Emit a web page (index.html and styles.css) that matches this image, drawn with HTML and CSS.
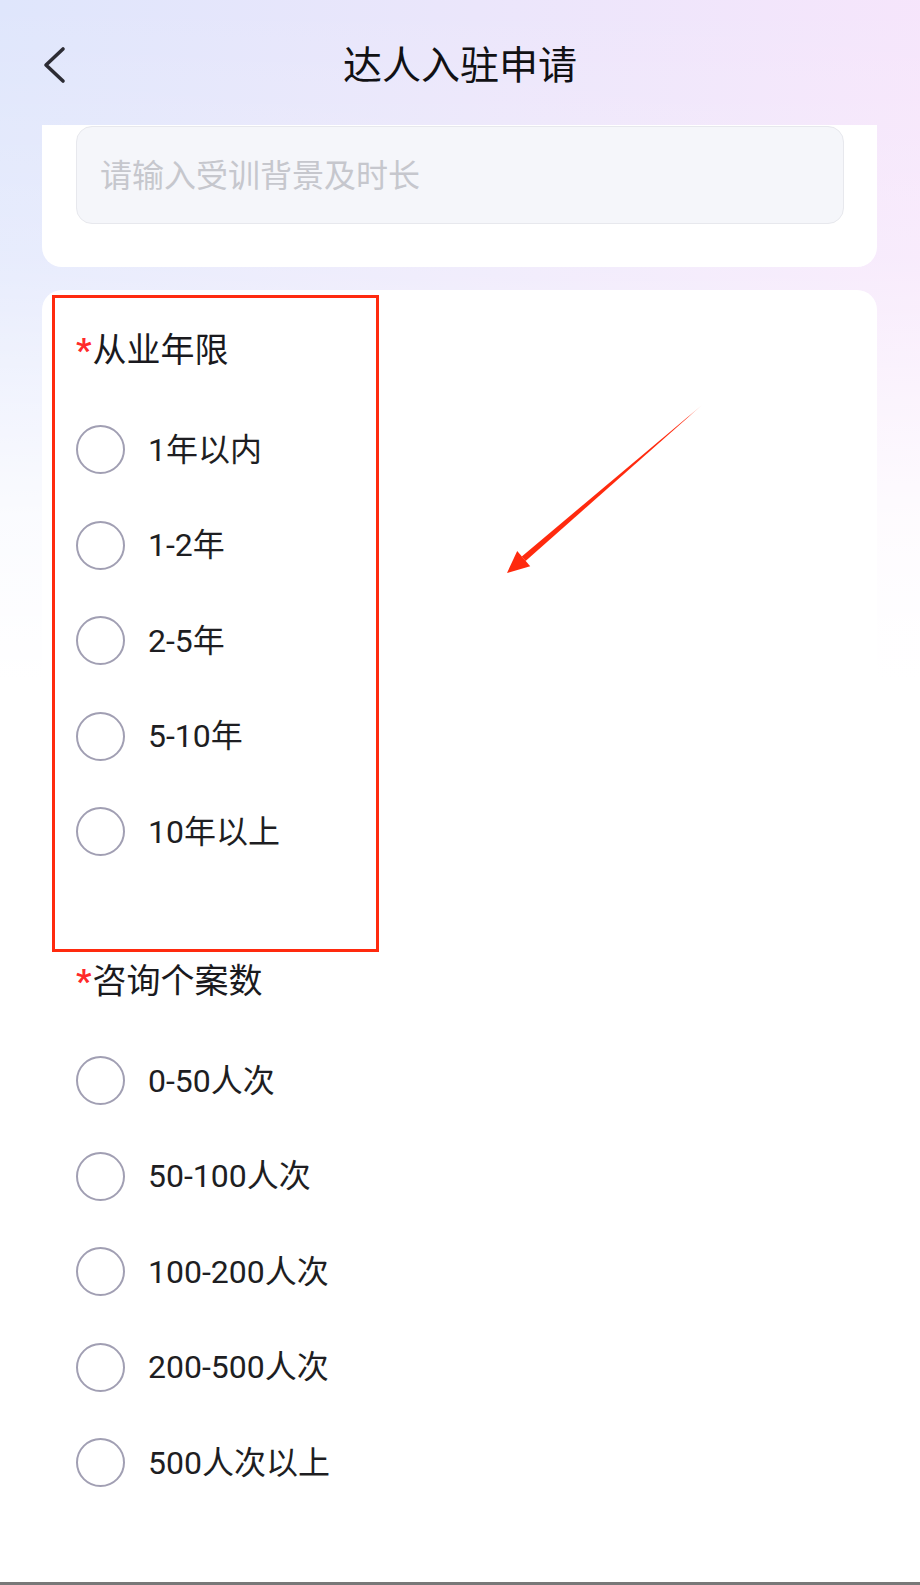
FILE: index.html
```html
<!DOCTYPE html>
<html lang="zh-CN">
<head>
<meta charset="utf-8">
<title>达人入驻申请</title>
<link rel="stylesheet" href="styles.css">
</head>
<body>
<div class="screen">
  <header class="nav">
    <div class="nav-left">
      <svg class="back" width="30" height="42" viewBox="0 0 30 42">
        <polyline points="23,5 6,21 23,37" fill="none" stroke="#2c2c34" stroke-width="3.6" stroke-linecap="round" stroke-linejoin="round"/>
      </svg>
    </div>
    <h1 class="nav-title">达人入驻申请</h1>
    <div class="nav-right"></div>
  </header>

  <main class="content">
    <section class="card card-top">
      <div class="input">请输入受训背景及时长</div>
    </section>

    <section class="card card-main">
      <div class="field">
        <div class="label"><span class="req">*</span>从业年限</div>
        <ul class="options">
          <li class="option"><span class="radio"></span><span class="opt-text">1年以内</span></li>
          <li class="option"><span class="radio"></span><span class="opt-text">1-2年</span></li>
          <li class="option"><span class="radio"></span><span class="opt-text">2-5年</span></li>
          <li class="option"><span class="radio"></span><span class="opt-text">5-10年</span></li>
          <li class="option"><span class="radio"></span><span class="opt-text">10年以上</span></li>
        </ul>
      </div>
      <div class="field">
        <div class="label"><span class="req">*</span>咨询个案数</div>
        <ul class="options">
          <li class="option"><span class="radio"></span><span class="opt-text">0-50人次</span></li>
          <li class="option"><span class="radio"></span><span class="opt-text">50-100人次</span></li>
          <li class="option"><span class="radio"></span><span class="opt-text">100-200人次</span></li>
          <li class="option"><span class="radio"></span><span class="opt-text">200-500人次</span></li>
          <li class="option"><span class="radio"></span><span class="opt-text">500人次以上</span></li>
        </ul>
      </div>
    </section>
  </main>

  <div class="sys-bar"></div>

  <div class="mark-box"></div>
  <svg class="mark-arrow" width="215" height="185" viewBox="0 0 215 185">
    <defs>
      <linearGradient id="shaft" gradientUnits="userSpaceOnUse" x1="207" y1="10" x2="12" y2="178">
        <stop offset="0" stop-color="#ff2a0e" stop-opacity="0.15"/>
        <stop offset="0.07" stop-color="#ff2a0e" stop-opacity="1"/>
        <stop offset="1" stop-color="#ff2a0e" stop-opacity="1"/>
      </linearGradient>
    </defs>
    <polygon points="207,10 30.6,166 26.8,161.4" fill="url(#shaft)"/>
    <polygon points="12,178 35.2,171.3 22.2,156.1" fill="#ff2a0e"/>
  </svg>
</div>
</body>
</html>
```

FILE: styles.css
```css
* {
  box-sizing: border-box;
}

html, body {
  margin: 0;
  padding: 0;
}

body {
  width: 920px;
  height: 1585px;
  overflow: hidden;
  font-family: Roboto, "Noto Sans CJK SC", "Noto Sans", sans-serif;
  color: #1e1e22;
  background: #ffffff;
}

.screen {
  position: relative;
  width: 920px;
  height: 1585px;
  display: flex;
  flex-direction: column;
  overflow: hidden;
  background:
    linear-gradient(180deg, rgba(255, 255, 255, 0) 0px, rgba(255, 255, 255, 0.25) 260px, rgba(255, 255, 255, 0.85) 520px, #ffffff 680px),
    linear-gradient(95deg, #dfe6fc 0%, #ebe6fb 45%, #f9e5fb 100%);
}

/* header */
.nav {
  flex: 0 0 125px;
  height: 125px;
  padding-top: 5px;
  display: grid;
  grid-template-columns: 1fr auto 1fr;
  align-items: center;
}

.nav-left {
  padding-left: 40px;
  display: flex;
  align-items: center;
}

.back {
  display: block;
}

.nav-title {
  margin: 0;
  font-size: 39px;
  line-height: 48px;
  font-weight: 400;
  color: #111114;
  letter-spacing: 0;
  position: relative;
  top: 1px;
}

/* content */
.content {
  flex: 1 1 auto;
  overflow: hidden;
  padding: 0 43px 0 42px;
  display: flex;
  flex-direction: column;
  gap: 23px;
}

.card {
  background: #ffffff;
}

.card-top {
  padding: 1px 33px 43px 34px;
  border-radius: 0 0 20px 20px;
}

.input {
  height: 98px;
  border: 1px solid #e7e8ed;
  border-radius: 16px;
  background: #f5f6fa;
  padding: 0 0 5px 23px;
  display: flex;
  align-items: center;
  font-family: "Noto Sans CJK SC", sans-serif;
  font-size: 32px;
  color: #c6c7cd;
}

.card-main {
  flex: 0 0 auto;
  min-height: 1400px;
  border-radius: 20px 20px 0 0;
  padding: 36px 34px 0 34px;
}

.field + .field {
  margin-top: 77.5px;
}

.label {
  font-size: 34px;
  line-height: 48px;
  color: #1a1a1e;
}

.req {
  color: #ff2a2a;
  font-weight: 700;
  margin-right: 1px;
}

.options {
  list-style: none;
  margin: 28px 0 0 0;
  padding: 0;
}

.option {
  height: 95.5px;
  display: flex;
  align-items: center;
  gap: 23px;
}

.radio {
  width: 49px;
  height: 49px;
  flex: 0 0 49px;
  border-radius: 50%;
  border: 2.5px solid #a19fb3;
  background: #ffffff;
}

.opt-text {
  font-size: 32px;
  line-height: 40px;
  color: #1e1e22;
}

.sys-bar {
  flex: 0 0 3px;
  height: 3px;
  background: #787878;
}

/* annotations overlay */
.mark-box {
  position: absolute;
  left: 52px;
  top: 295px;
  width: 327px;
  height: 657px;
  border: 3px solid #ff2a0e;
  pointer-events: none;
}

.mark-arrow {
  position: absolute;
  left: 495px;
  top: 395px;
  pointer-events: none;
}
```
